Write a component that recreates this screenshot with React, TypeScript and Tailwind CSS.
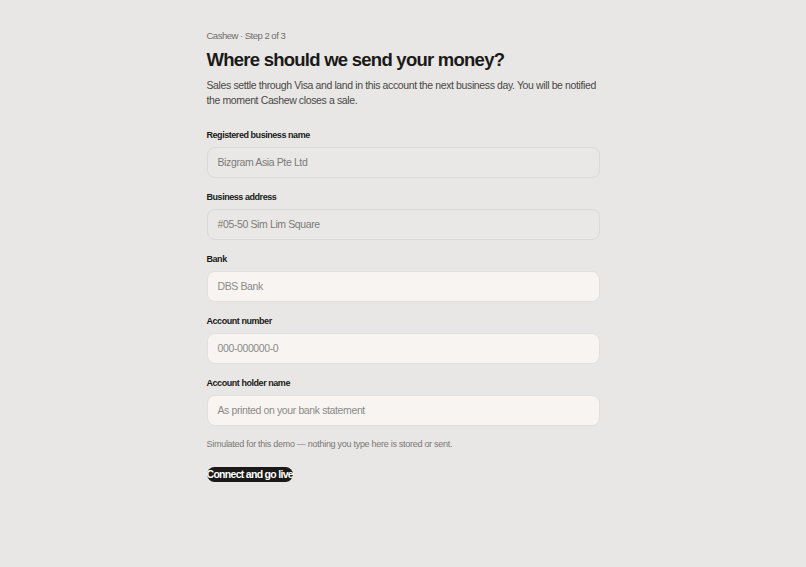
import React from "react";

const fields = [
  { label: "Registered business name", placeholder: "Bizgram Asia Pte Ltd", muted: true },
  { label: "Business address", placeholder: "#05-50 Sim Lim Square", muted: true },
  { label: "Bank", placeholder: "DBS Bank", muted: false },
  { label: "Account number", placeholder: "000-000000-0", muted: false },
  { label: "Account holder name", placeholder: "As printed on your bank statement", muted: false },
];

export default function App() {
  return (
    <div
      className="min-h-[567px] w-full bg-[#e8e7e5]"
      style={{ fontFamily: "'Liberation Sans', Arial, sans-serif" }}
    >
      <div className="mx-auto w-[393px] pt-[29px]">
        <div className="text-[9.5px] leading-[13px] tracking-[-0.5px] text-[#6f6d6a]">Cashew · Step 2 of 3</div>
        <h1 className="mt-[5px] text-[18.5px] font-bold leading-[26px] tracking-[-0.75px] text-[#1b1a19]">
          Where should we send your money?
        </h1>
        <p className="mt-[5px] text-[10.5px] leading-[15px] tracking-[-0.38px] text-[#4a4845]">
          Sales settle through Visa and land in this account the next business day. You will be notified the moment Cashew closes a sale.
        </p>
        <div className="mt-[21px] flex flex-col gap-[13px]">
          {fields.map((f) => (
            <div key={f.label} className="flex flex-col gap-[6px]">
              <label className="text-[9px] font-bold leading-[12px] tracking-[-0.45px] text-[#1b1a19]">{f.label}</label>
              <div
                className={
                  f.muted
                    ? "flex h-[31px] items-center rounded-[8px] border border-[#dcdad7] bg-[#e9e8e6] px-[10px] text-[10.5px] tracking-[-0.38px] text-[#7d7b78]"
                    : "flex h-[31px] items-center rounded-[8px] border border-[#e2dfdc] bg-[#f7f4f2] px-[10px] text-[10.5px] tracking-[-0.38px] text-[#8c8a87]"
                }
              >
                {f.placeholder}
              </div>
            </div>
          ))}
        </div>
        <p className="mt-[12px] text-[9px] leading-[12px] tracking-[-0.28px] text-[#7a7875]">
          Simulated for this demo — nothing you type here is stored or sent.
        </p>
        <button className="mt-[17px] h-[15px] rounded-full bg-[#1b1a19] text-[10.5px] font-bold leading-[15px] tracking-[-0.7px] text-white">
          Connect and go live
        </button>
      </div>
    </div>
  );
}
